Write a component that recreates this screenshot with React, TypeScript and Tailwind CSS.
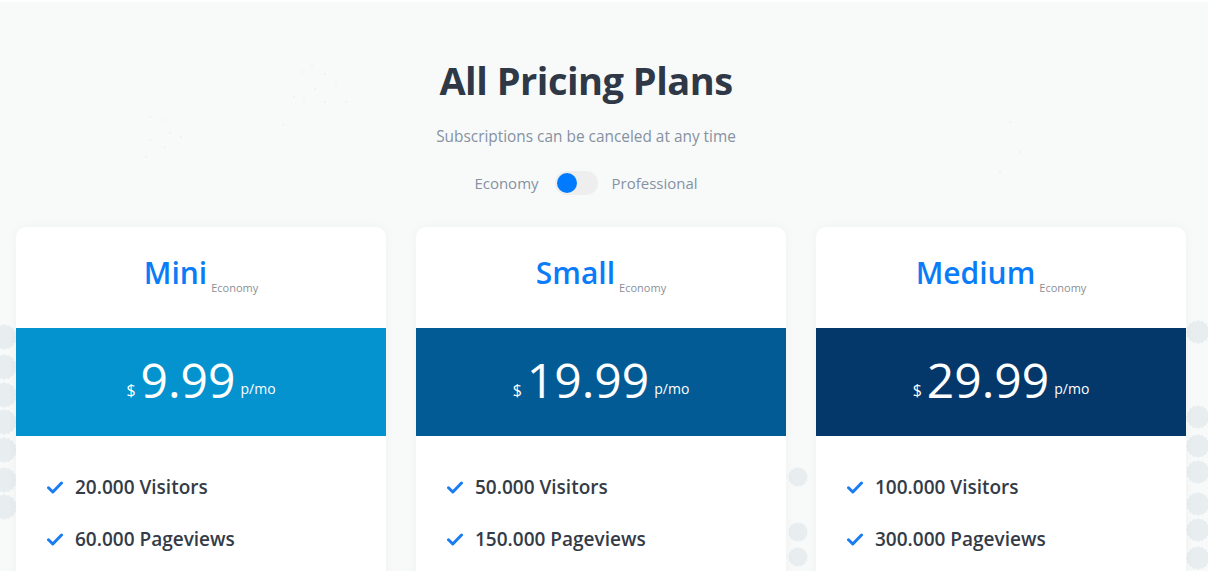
import React from "react";

const plans = [
  { name: "Mini", price: "9.99", band: "bg-[#0493cf]", features: ["20.000 Visitors", "60.000 Pageviews"] },
  { name: "Small", price: "19.99", band: "bg-[#035b95]", features: ["50.000 Visitors", "150.000 Pageviews"] },
  { name: "Medium", price: "29.99", band: "bg-[#04376a]", features: ["100.000 Visitors", "300.000 Pageviews"] },
];

function Check() {
  return (
    <svg width="16" height="13" viewBox="0 0 16 13" className="shrink-0">
      <path d="M1.5 6.8 L5.8 11 L14.5 2" fill="none" stroke="#1a7cf5" strokeWidth="3" strokeLinecap="round" strokeLinejoin="round" />
    </svg>
  );
}

function Gear({ cx, cy, r }: { cx: number; cy: number; r: number }) {
  const pts: string[] = [];
  const n = 16;
  for (let i = 0; i < n * 2; i++) {
    const a = (Math.PI * i) / n;
    const rr = i % 2 === 0 ? r : r * 0.9;
    pts.push(`${cx + rr * Math.cos(a)},${cy + rr * Math.sin(a)}`);
  }
  return <polygon points={pts.join(" ")} fill="#e8eef0" />;
}

export default function App() {
  const gears = [
    [4, 335, 13], [4, 365, 13], [4, 393, 13], [4, 420, 13], [4, 448, 13], [4, 478, 13], [4, 505, 13],
    [1198, 330, 12], [1198, 415, 12], [1198, 444, 12], [1198, 470, 12], [1198, 502, 12], [1198, 528, 12], [1198, 556, 12],
    [798, 475, 10], [798, 530, 10], [798, 555, 10],
  ];
  return (
    <div className="relative w-[1208px] h-[571px] overflow-hidden bg-[#f8fafa] border-t-2 border-white" style={{ fontFamily: "'Open Sans', Lato, sans-serif" }}>
      <svg className="absolute inset-0" width="1208" height="571">
        {gears.map(([x, y, r], i) => (
          <Gear key={i} cx={x} cy={y} r={r} />
        ))}
        {[
          [150, 115], [163, 118], [170, 131], [181, 135], [150, 138], [165, 145], [146, 155],
          [302, 70], [312, 64], [325, 72], [336, 83], [315, 87], [294, 95], [304, 97], [325, 100], [346, 100], [283, 123],
          [1010, 120], [1020, 150], [1000, 170],
        ].map(([x, y], i) => (
          <circle key={i} cx={x} cy={y} r="1" fill="#eef1f1" />
        ))}
      </svg>
      <div className="relative flex flex-col">
        <div className="flex flex-col items-center pr-[36px]">
          <h1 className="mt-[54px] text-[38px] leading-[48px] font-bold text-[#2e3846] tracking-[-0.5px]">All Pricing Plans</h1>
          <p className="mt-[22px] text-[15.4px] leading-[22px] text-[#8691a1]">Subscriptions can be canceled at any time</p>
          <div className="mt-[23px] flex items-center text-[15px] leading-[22px] text-[#8691a1]">
            <span>Economy</span>
            <div className="ml-[16px] mr-[14px] w-[43px] h-[24px] rounded-full bg-[#eeeeee] flex items-center px-[2px]">
              <div className="w-[20px] h-[20px] rounded-full bg-[#007bff]" />
            </div>
            <span>Professional</span>
          </div>
        </div>
        <div className="mt-[32px] flex gap-[30px] px-[16px] w-full">
          {plans.map((p) => (
            <div key={p.name} className="w-[370px] bg-white rounded-t-[10px] shadow-[0_0_12px_rgba(0,0,0,0.04)] h-[400px]">
              <div className="h-[101px] flex items-center justify-center pb-[9px]">
                <span className="text-[30px] font-semibold text-[#0a7cf7] leading-none">{p.name}</span>
                <span className="ml-[4px] mt-[28px] text-[11px] text-[#8a8f96] leading-none">Economy</span>
              </div>
              <div className={`${p.band} h-[108px] flex items-center justify-center text-white pb-[5px]`}>
                <span className="text-[16px] mt-[20px] mr-[5px]">$</span>
                <span className="text-[48px] font-normal leading-none">{p.price}</span>
                <span className="text-[14px] mt-[18px] ml-[5px]">p/mo</span>
              </div>
              <div className="pt-[40px] pl-[31px] flex flex-col gap-[30px]">
                {p.features.map((f) => (
                  <div key={f} className="flex items-center gap-[12px] h-[22px]">
                    <Check />
                    <span className="text-[19px] font-semibold text-[#343b47]">{f}</span>
                  </div>
                ))}
              </div>
            </div>
          ))}
        </div>
      </div>
    </div>
  );
}
